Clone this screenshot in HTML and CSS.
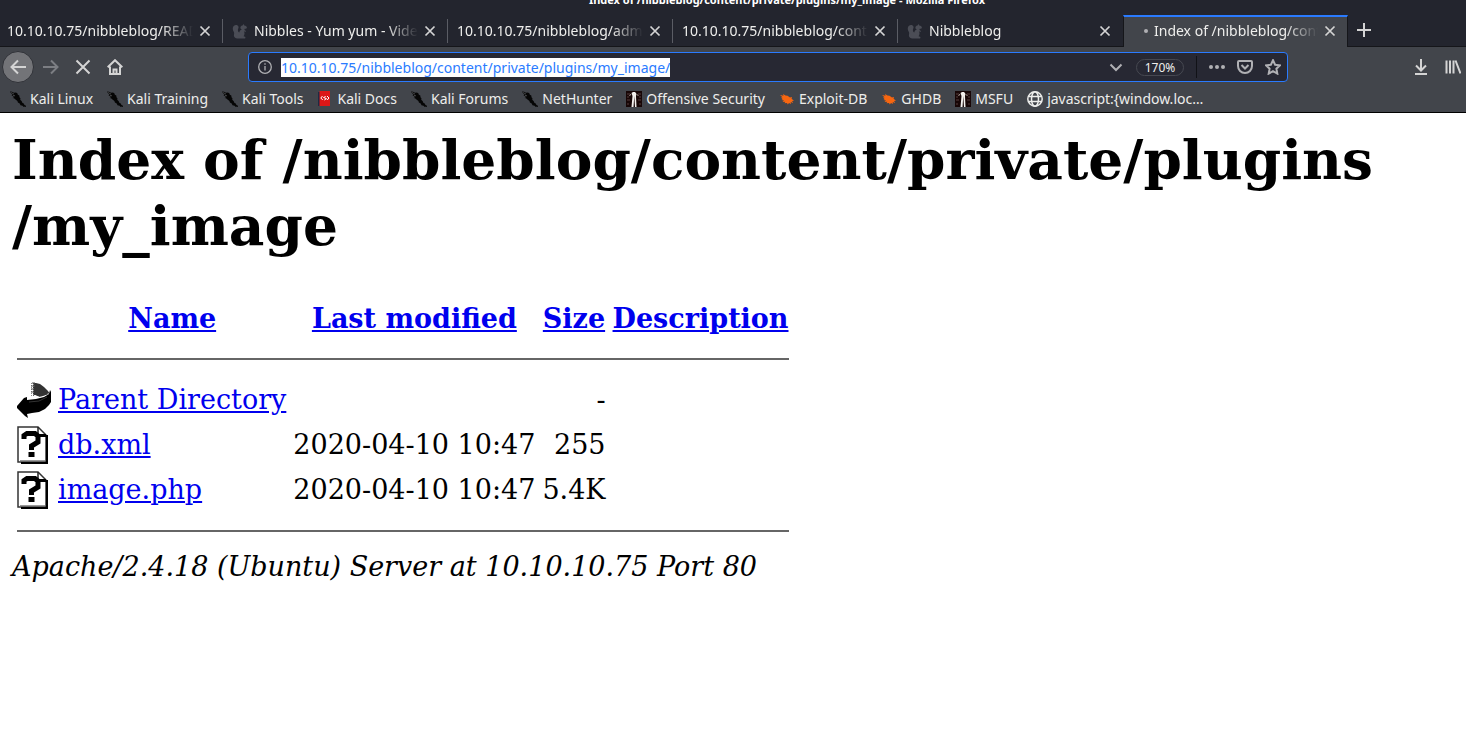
FILE: index.html
```
<!DOCTYPE html>
<html lang="en">
  <head>
    <meta charset="UTF-8" />
    <meta name="viewport" content="width=device-width, initial-scale=1.0" />
    <title>Index of /nibbleblog/content/private/plugins/my_image</title>
    <link rel="stylesheet" href="styles.css">
  </head>

  <body>
    <!-- shared icons -->
    <svg class="sprite" width="0" height="0" aria-hidden="true">
      <symbol id="close" viewBox="0 0 12 12">
        <path d="M1.5 1.5l9 9M10.5 1.5l-9 9" fill="none" stroke="currentColor" stroke-width="1.7" />
      </symbol>
      <symbol id="squirrel" viewBox="0 0 16 16">
        <path d="M5 15.500C2.500 15 1.500 13.500 2 11.500c.3-1.200.2-2-.4-3C.4 6.500.5 4 2 2.800 3.500 1.500 6 2 6.500 3.800c.4 1.400-.8 2.300-.6 3.600.1.900.7 1.600 1.400 2C7.500 8 8.500 7 9.800 6.500L8.500 5.500C8 4 9 2.800 10.500 2.600L11.500 1l.8 1.500c1.500.3 2.700 1.200 2.600 2.300-.1.900-1.200 1.100-2.200 1l-.3 1.200 1.600 1-.6.900-1.500-.6c.9 1.600.8 3.600-.3 5l1.900.8-.4 1.400z" fill="currentColor" />
      </symbol>
      <symbol id="dragon" viewBox="0 0 16 16">
        <path d="M0 .5l2 .2 2 1L6 1.500l1.500 1 .3 1.300 1.500.8.2 1.700 1 1.200-.3 1.200 1.600 1.500.3 1.300 1.600 1 .8 1.500 1.500.8v1.200l-1.500-.6-.5.800-1.500-1.400-2-.6-.8-1.700-1.800-1-.5-1.600L5.500 8.500 4 7.300 2.500 7l1.600-.8L2.800 5l-1.500-.6 1.400-.5L1.200 2.500z" fill="#050505" />
        <path d="M1 1.500l3 1.600M3 4.500l2 .3" stroke="#85878a" stroke-width=".5" />
      </symbol>
      <symbol id="statue" viewBox="0 0 16 16">
        <path d="M0 0h16v16H0z" fill="#170606" />
        <path d="M1 3h3M1 6h2M1 9h3M12 3h3M13 6h2M12 9h3M1 13h2M13 13h2" stroke="#573c3c" />
        <path d="M5.500 16L6.500 5l-1-3L7 1h2l1.300 1.500-.3 3 .5 10.500H9L8.300 5 7.500 16z" fill="#f3f0ed" />
        <path d="M5 3L3.500 5M10.500 3l2 2" stroke="#a89c96" />
      </symbol>
      <symbol id="bug" viewBox="0 0 16 16">
        <path d="M1 4l3.500.8L4 3l2.500 1.500 2 .2 2.500 1.800 2-.6-.4 1.800 2.400 2-2 .2 1.200 2-2.500-1 .3 2-2-1-1.200 1.600-.8-1.600-2.500.4.8-1.600-2.800.2 1.500-1.400L2.500 9l1.200-.8L2 6.500l1.500-.3z" fill="#f76610" />
      </symbol>
      <symbol id="unknown" viewBox="0 0 31 38">
        <path d="M1 1h20l8 8v27H1z" fill="#fff" stroke="#333" stroke-width="1.500" />
        <path d="M4 37h26V9" fill="none" stroke="#000" stroke-width="2" />
        <path d="M3 34.500h25" stroke="#999" />
        <path d="M21 1v8h8" fill="none" stroke="#222" stroke-width="1.500" />
        <path d="M20 8h9v3h-9z" fill="#000" />
        <path d="M7 13V9.500L10 7.500h8L21 10v6l-6.500 4v4" fill="none" stroke="#000" stroke-width="5" />
        <path d="M11.500 26h6v5h-6z" fill="#000" />
      </symbol>
    </svg>

    <header class="browser">
      <div class="titlebar">
        <p class="titlebar__text">Index of /nibbleblog/content/private/plugins/my_image - Mozilla Firefox</p>
      </div>

      <nav class="tabs" aria-label="Tabs">
        <div class="tab tab--first">
          <span class="tab__label">10.10.10.75/nibbleblog/README</span>
          <button class="tab__close" aria-label="Close tab"><svg><use href="#close" /></svg></button>
        </div>
        <div class="tab">
          <svg class="tab__icon"><use href="#squirrel" /></svg>
          <span class="tab__label">Nibbles - Yum yum - Videos</span>
          <button class="tab__close" aria-label="Close tab"><svg><use href="#close" /></svg></button>
        </div>
        <div class="tab">
          <span class="tab__label">10.10.10.75/nibbleblog/admin.php</span>
          <button class="tab__close" aria-label="Close tab"><svg><use href="#close" /></svg></button>
        </div>
        <div class="tab">
          <span class="tab__label">10.10.10.75/nibbleblog/content/</span>
          <button class="tab__close" aria-label="Close tab"><svg><use href="#close" /></svg></button>
        </div>
        <div class="tab">
          <svg class="tab__icon"><use href="#squirrel" /></svg>
          <span class="tab__label">Nibbleblog</span>
          <button class="tab__close" aria-label="Close tab"><svg><use href="#close" /></svg></button>
        </div>
        <div class="tab tab--active">
          <span class="tab__loading"></span>
          <span class="tab__label">Index of /nibbleblog/content/private</span>
          <button class="tab__close" aria-label="Close tab"><svg><use href="#close" /></svg></button>
        </div>
        <button class="tabs__new" aria-label="New tab">
          <svg viewBox="0 0 14 14"><path d="M7 0v14M0 7h14" stroke="currentColor" stroke-width="2" /></svg>
        </button>
      </nav>

      <div class="toolbar">
        <div class="toolbar__nav">
          <button class="tool tool--back" aria-label="Back">
            <svg viewBox="0 0 16 16"><path d="M16 8H1.500M8 1.500L1.500 8 8 14.500" /></svg>
          </button>
          <button class="tool" aria-label="Forward" disabled>
            <svg viewBox="0 0 16 16"><path d="M0 8h14.500M8 1.500L14.500 8 8 14.500" /></svg>
          </button>
          <button class="tool" aria-label="Stop">
            <svg viewBox="0 0 16 16"><path d="M1.500 1.500l13 13M14.500 1.500l-13 13" /></svg>
          </button>
          <button class="tool" aria-label="Home">
            <svg viewBox="0 0 16 16"><path d="M.7 8.300L8 1.200l7.300 7.100M3 7.500V15h10V7.500" /><path d="M6.500 15v-4.500h3V15" /></svg>
          </button>
        </div>

        <form class="urlbar">
          <svg class="urlbar__info" viewBox="0 0 14 14"><circle cx="7" cy="7" r="6.300" /><path d="M7 6v4.500M7 3.300v1.500" /></svg>
          <input class="urlbar__input" type="text" aria-label="Address" value="10.10.10.75/nibbleblog/content/private/plugins/my_image/" />
          <div class="urlbar__actions">
            <button class="urlbar__button" type="button" aria-label="Show history">
              <svg viewBox="0 0 16 16"><path d="M2.500 5.500L8 11l5.500-5.500" /></svg>
            </button>
            <button class="urlbar__zoom" type="button">170%</button>
            <span class="urlbar__separator"></span>
            <button class="urlbar__button" type="button" aria-label="Page actions">
              <svg viewBox="0 0 16 16"><g fill="currentColor" stroke="none"><circle cx="2" cy="8" r="2" /><circle cx="8" cy="8" r="2" /><circle cx="14" cy="8" r="2" /></g></svg>
            </button>
            <button class="urlbar__button" type="button" aria-label="Save to Pocket">
              <svg viewBox="0 0 16 16"><path d="M2 2h12a1 1 0 0 1 1 1v4a7 7 0 0 1-14 0V3a1 1 0 0 1 1-1z" /><path d="M4.500 6L8 9.500 11.500 6" /></svg>
            </button>
            <button class="urlbar__button" type="button" aria-label="Bookmark this page">
              <svg viewBox="0 0 16 16"><path d="M8 1.200l2.100 4.500 4.900.6-3.600 3.400.9 4.900L8 12.200l-4.300 2.400.9-4.900L1 6.300l4.900-.6z" /></svg>
            </button>
          </div>
        </form>

        <div class="toolbar__extra">
          <button class="tool" aria-label="Downloads">
            <svg viewBox="0 0 16 16"><path d="M8 0v11M3 6.500L8 11.500l5-5M2 15h12" /></svg>
          </button>
          <button class="tool" aria-label="Library">
            <svg viewBox="0 0 16 16"><path d="M1.500 1.500v13M5 1.500v13M8.500 1.500v13M10.500 1.500l5 13" /></svg>
          </button>
        </div>
      </div>

      <nav class="bookmarks" aria-label="Bookmarks">
        <a class="bookmark" href="#"><svg><use href="#dragon" /></svg>Kali Linux</a>
        <a class="bookmark" href="#"><svg><use href="#dragon" /></svg>Kali Training</a>
        <a class="bookmark" href="#"><svg><use href="#dragon" /></svg>Kali Tools</a>
        <a class="bookmark" href="#">
          <svg viewBox="0 0 16 16">
            <path d="M1 1h3v14H1z" fill="#1f2a44" />
            <path d="M2.500 0H13v15H2.500z" fill="#dc1717" />
            <path d="M5.500 5L3.800 7l2 2M10 5l2 2-1.800 2M8.700 5.500L6.500 6.500l3 1.200-2.200 1.300" fill="none" stroke="#fff" />
          </svg>Kali Docs</a>
        <a class="bookmark" href="#"><svg><use href="#dragon" /></svg>Kali Forums</a>
        <a class="bookmark" href="#"><svg><use href="#dragon" /></svg>NetHunter</a>
        <a class="bookmark" href="#"><svg><use href="#statue" /></svg>Offensive Security</a>
        <a class="bookmark" href="#"><svg><use href="#bug" /></svg>Exploit-DB</a>
        <a class="bookmark" href="#"><svg><use href="#bug" /></svg>GHDB</a>
        <a class="bookmark" href="#"><svg><use href="#statue" /></svg>MSFU</a>
        <a class="bookmark" href="#">
          <svg viewBox="0 0 16 16" fill="none" stroke="currentColor" stroke-width="1.500">
            <circle cx="8" cy="8" r="7.200" /><ellipse cx="8" cy="8" rx="3.500" ry="7.200" /><path d="M1.500 5.500h13M1.500 10.500h13" />
          </svg>javascript:{window.loc…</a>
      </nav>
    </header>

    <main class="listing">
      <h1 class="listing__title">Index of /nibbleblog/content/private/plugins<wbr>/my_image</h1>

      <table class="files">
        <thead>
          <tr>
            <td class="files__icon"></td>
            <th><a href="#">Name</a></th>
            <th><a href="#">Last modified</a></th>
            <th><a href="#">Size</a></th>
            <th><a href="#">Description</a></th>
          </tr>
        </thead>
        <tbody>
          <tr><td colspan="5"><hr /></td></tr>
          <tr>
            <td class="files__icon">
              <svg class="files__back" viewBox="0 0 34 38">
                <path d="M16 2l3 0 4 1 4 3 4 4 2 3-4 1-6 2-5-2-2 1z" fill="#333" />
                <path d="M14.500 2v13M16.500 3v12" stroke="#888" stroke-dasharray="1 1" />
                <path d="M15 2h3M14 5h4M14 8h3M14 11h3" stroke="#555" />
                <path d="M17 15l5 2 6-1 4-3" fill="none" stroke="#fff" stroke-width="2" stroke-dasharray="2 1" />
                <path d="M33 9l1 2v10l-2 3-4 4-6 3-7 1-5 1 1 4-3-2-8-8v-2l7-8 3-1v3l9-1 8-2 5-3z" fill="#000" />
                <path d="M12 21l10-1 8-4" fill="none" stroke="#333" />
              </svg>
            </td>
            <td><a href="#">Parent Directory</a></td>
            <td></td>
            <td class="files__number">-</td>
            <td></td>
          </tr>
          <tr>
            <td class="files__icon"><svg><use href="#unknown" /></svg></td>
            <td><a href="#">db.xml</a></td>
            <td class="files__number">2020-04-10 10:47</td>
            <td class="files__number">255</td>
            <td></td>
          </tr>
          <tr>
            <td class="files__icon"><svg><use href="#unknown" /></svg></td>
            <td><a href="#">image.php</a></td>
            <td class="files__number">2020-04-10 10:47</td>
            <td class="files__number">5.4K</td>
            <td></td>
          </tr>
          <tr><td colspan="5"><hr /></td></tr>
        </tbody>
      </table>

      <address class="listing__server">Apache/2.4.18 (Ubuntu) Server at 10.10.10.75 Port 80</address>
    </main>
  </body>
</html>
```
FILE: styles.css
```
:root {
  --color-frame: #23252e;
  --color-toolbar: #42454b;
  --color-field: #272833;
  --color-line: #15161a;
  --color-text: #eeeeec;
  --color-icon: #d4d4d4;
  --color-muted: #b0b0b4;
  --color-focus: #2a7bff;
  --color-link: #0000ee;
}

* {
  box-sizing: border-box;
}

body {
  margin: 0;
  background-color: #fff;
  color: #000;
  font-family: "DejaVu Serif", serif;
  font-size: 27px;
}

button {
  display: flex;
  flex: none;
  align-items: center;
  justify-content: center;
  padding: 0;
  border: none;
  background: none;
  color: var(--color-icon);
  font: inherit;
}

.sprite {
  position: absolute;
}

/* browser window */

.browser {
  overflow: hidden;
  border-bottom: 1px solid #000;
  background-color: var(--color-toolbar);
  color: var(--color-text);
  font-family: "Noto Sans", sans-serif;
  font-size: 14px;
}

.titlebar {
  height: 15px;
  background-color: var(--color-frame);
  text-align: center;
}

/* only the lower half of the title stays on screen */
.titlebar__text {
  margin: 0;
  padding-left: 108px;
  color: #fff;
  font-size: 11px;
  font-weight: bold;
  line-height: 0;
}

.tabs {
  display: flex;
  height: 32px;
  border-bottom: 1px solid var(--color-line);
  background-color: var(--color-frame);
}

.tab {
  display: flex;
  flex: 0 1 225px;
  align-items: center;
  gap: 6px;
  min-width: 0;
  padding: 0 12px 0 9px;
  background: linear-gradient(#5b5d65, #5b5d65) right center / 1px 24px no-repeat;
}

.tab--first {
  flex-basis: 223px;
  padding-left: 7px;
}

.tab:nth-child(5) {
  background: none;
}

.tab--active {
  height: 32px;
  padding: 0 11px 2px 20px;
  border: 1px solid var(--color-line);
  border-top: 2px solid var(--color-focus);
  border-bottom: none;
  background: var(--color-toolbar);
}

.tab__icon {
  flex: none;
  width: 16px;
  height: 16px;
  color: #4b4d56;
}

.tab__loading {
  flex: none;
  width: 4px;
  height: 4px;
  border-radius: 50%;
  background-color: var(--color-muted);
}

.tab__label {
  flex: 1;
  min-width: 0;
  overflow: hidden;
  line-height: 20px;
  white-space: nowrap;
  mask-image: linear-gradient(to left, transparent, #000 32px);
}

.tab__close {
  width: 12px;
  height: 12px;
}

.tab__close svg {
  width: 12px;
  height: 12px;
}

.tabs__new {
  width: 32px;
  height: 30px;
}

.tabs__new svg {
  width: 14px;
  height: 14px;
}

.toolbar {
  display: flex;
  align-items: center;
  height: 40px;
  padding: 0 0 0 2px;
}

.toolbar__nav {
  display: flex;
  flex: none;
  align-items: center;
}

/* the last button runs past the window edge */
.toolbar__extra {
  display: flex;
  flex: none;
  margin-right: -3px;
}

.tool {
  width: 32px;
  height: 32px;
}

.tool svg {
  width: 16px;
  height: 16px;
  fill: none;
  stroke: currentColor;
  stroke-width: 2;
}

.tool:disabled {
  color: #7c7e83;
}

.tool--back {
  margin-right: 1px;
  border: 1px solid #303238;
  border-radius: 50%;
  background-color: #737478;
}

.urlbar {
  display: flex;
  flex: 1;
  align-items: center;
  min-width: 0;
  height: 30px;
  margin: 0 117px;
  padding: 0 0 0 9px;
  border: 1px solid var(--color-focus);
  border-radius: 4px;
  background-color: var(--color-field);
}

.urlbar__info {
  flex: none;
  width: 14px;
  height: 14px;
  margin-right: 9px;
  fill: none;
  stroke: var(--color-muted);
  stroke-width: 1.3;
}

.urlbar__input {
  min-width: 0;
  height: 19px;
  padding: 0;
  border: none;
  outline: none;
  background-color: #fff;
  color: var(--color-focus);
  font: inherit;
  field-sizing: content;
}

.urlbar__actions {
  display: flex;
  flex: none;
  align-items: center;
  margin-left: auto;
}

.urlbar__button {
  width: 28px;
  height: 28px;
  color: var(--color-muted);
}

.urlbar__button svg {
  width: 16px;
  height: 16px;
  fill: none;
  stroke: currentColor;
  stroke-width: 2;
}

.urlbar__zoom {
  width: 48px;
  height: 17px;
  margin: 0 12px 0 6px;
  border: 1px solid #464851;
  border-radius: 9px;
  color: var(--color-text);
  font-size: 12px;
}

.urlbar__separator {
  width: 1px;
  height: 22px;
  margin-right: 6px;
  background-color: #111217;
}

.bookmarks {
  display: flex;
  gap: 14px;
  height: 25px;
  padding: 0 10px;
}

.bookmark {
  display: flex;
  flex: none;
  align-items: center;
  gap: 4px;
  height: 23px;
  color: var(--color-text);
  text-decoration: none;
}

.bookmark svg {
  width: 16px;
  height: 16px;
}

/* directory listing */

.listing {
  padding: 14px 12px;
}

.listing a {
  color: var(--color-link);
}

.listing__title {
  margin: 0 0 36px;
  font-size: 55px;
  line-height: 66px;
}

.files {
  border-spacing: 3px;
}

.files td,
.files th {
  padding: 2px;
  line-height: 32px;
  white-space: nowrap;
}

.files hr {
  height: 2px;
  margin: 14px 0;
  border: none;
  background-color: #666;
}

.files .files__icon {
  height: 41px;
  vertical-align: top;
}

.files__icon svg {
  display: block;
  width: 31px;
  height: 38px;
}

.files__icon .files__back {
  width: 34px;
}

.files__number {
  text-align: right;
}

.listing__server {
  line-height: 32px;
}
```
